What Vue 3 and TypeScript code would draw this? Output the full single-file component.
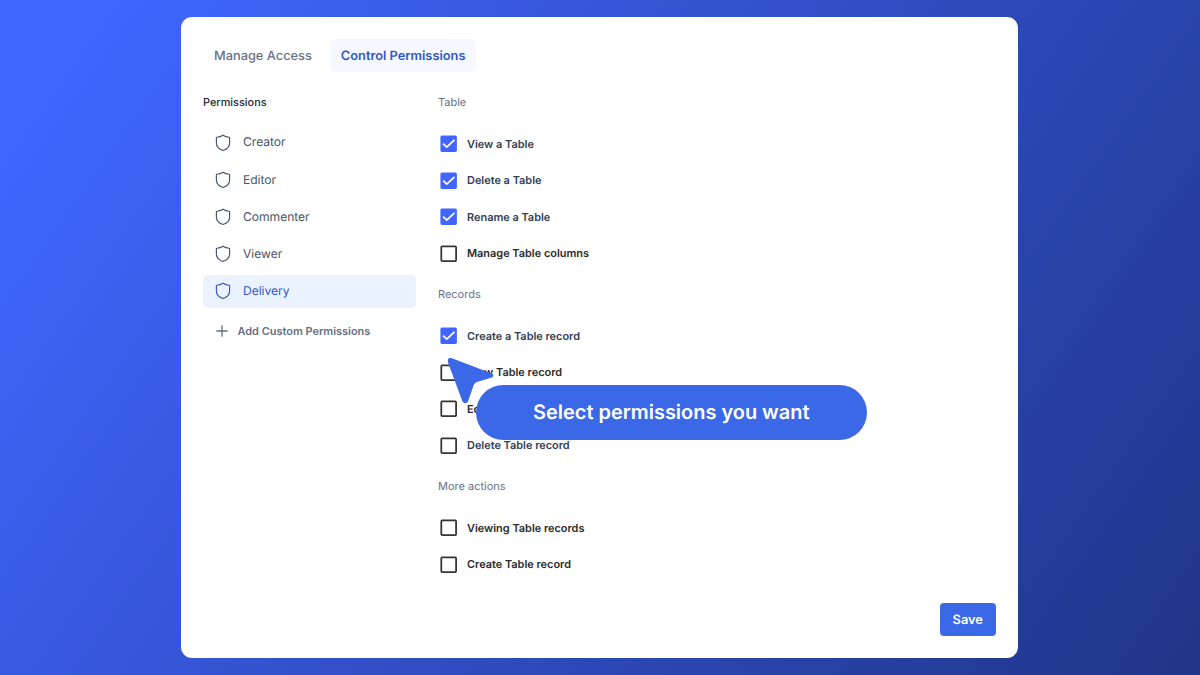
<script setup lang="ts">
interface Permission {
  label: string
  checked: boolean
  tone: 'slate' | 'ink'
}

interface Group {
  title: string
  items: Permission[]
}

const roles: string[] = ['Creator', 'Editor', 'Commenter', 'Viewer', 'Delivery']
const activeRole = 'Delivery'

const groups: Group[] = [
  {
    title: 'Table',
    items: [
      { label: 'View a Table', checked: true, tone: 'slate' },
      { label: 'Delete a Table', checked: true, tone: 'slate' },
      { label: 'Rename a Table', checked: true, tone: 'slate' },
      { label: 'Manage Table columns', checked: false, tone: 'ink' },
    ],
  },
  {
    title: 'Records',
    items: [
      { label: 'Create a Table record', checked: true, tone: 'slate' },
      { label: 'View Table record', checked: false, tone: 'ink' },
      { label: 'Edit Table record', checked: false, tone: 'ink' },
      { label: 'Delete Table record', checked: false, tone: 'slate' },
    ],
  },
  {
    title: 'More actions',
    items: [
      { label: 'Viewing Table records', checked: false, tone: 'ink' },
      { label: 'Create Table record', checked: false, tone: 'ink' },
    ],
  },
]
</script>

<template>
  <main class="stage">
    <section class="card">
      <nav class="tabs">
        <button class="tab">Manage Access</button>
        <button class="tab active">Control Permissions</button>
      </nav>

      <div class="columns">
        <aside class="sidebar">
          <h2 class="side-title">Permissions</h2>
          <ul class="roles">
            <li v-for="role in roles" :key="role" class="role" :class="{ active: role === activeRole }">
              <svg class="shield" viewBox="0 0 16 18" fill="none" stroke="currentColor" stroke-width="1.15" stroke-linejoin="round">
                <path d="M8 1.2C6.3 2.3 3.9 3 1.8 3.2C1.5 3.2 1.4 3.3 1.4 3.6V8.9C1.4 12.2 4 15 8 16.5C12 15 14.6 12.2 14.6 8.9V3.6C14.6 3.3 14.5 3.2 14.2 3.2C12.1 3 9.7 2.3 8 1.2Z" />
              </svg>
              <span>{{ role }}</span>
            </li>
          </ul>
          <button class="add">
            <svg class="plus" viewBox="0 0 12 12" fill="none" stroke="currentColor" stroke-width="1.3" stroke-linecap="round">
              <path d="M6 .8V11.2M.8 6H11.2" />
            </svg>
            <span>Add Custom Permissions</span>
          </button>
        </aside>

        <div class="groups">
          <section v-for="group in groups" :key="group.title" class="group">
            <h3 class="group-title">{{ group.title }}</h3>
            <div v-for="item in group.items" :key="item.label" class="row" :class="item.tone">
              <svg class="box" viewBox="-.3 -.2 17 17" fill="none">
                <template v-if="item.checked">
                  <rect x=".1" y=".2" width="16.5" height="16.5" rx="1.6" fill="#4066ff" />
                  <path d="M2.8 8.5L6.5 12L14.2 4.6" stroke="#fff" stroke-width="1.7" />
                </template>
                <rect v-else x="1" y="1.1" width="14.8" height="14.8" rx=".9" stroke="#333" stroke-width="1.75" />
              </svg>
              <span>{{ item.label }}</span>
            </div>
          </section>
        </div>
      </div>

      <button class="save">Save</button>
    </section>

    <div class="callout">Select permissions you want</div>
    <svg class="cursor" viewBox="0 0 48 48">
      <path d="M4.6 .4L43.2 15.2C46.1 16.4 46.1 18.8 43.2 19.7L29.6 23.7C27.6 24.3 26.2 25.8 25.5 27.6L20.2 43C19.1 46 15.3 45.8 14.2 42.8L.3 5.2C-.8 2-.1-1.3 4.6 .4Z" fill="#3b68e6" />
    </svg>
  </main>
</template>

<style>
body {
  margin: 0;
}
</style>

<style scoped>
.stage {
  position: relative;
  box-sizing: border-box;
  width: 1200px;
  height: 675px;
  padding: 17px 182px 17px 181px;
  overflow: hidden;
  background: linear-gradient(125deg, #4066ff 6%, #20368a 98%);
  font-family: Inter, 'Liberation Sans', sans-serif;
  text-rendering: geometricPrecision;
}

button {
  border: 0;
  padding: 0;
  background: none;
  font: inherit;
  color: inherit;
  text-rendering: inherit;
}

h2,
h3,
ul {
  margin: 0;
  padding: 0;
  list-style: none;
  font-weight: 400;
}

.card {
  display: flex;
  flex-direction: column;
  box-sizing: border-box;
  height: 641px;
  padding: 22px;
  border-radius: 11px;
  background: #fff;
}

.tabs {
  display: flex;
  gap: 7px;
}

.tab {
  height: 33px;
  padding: 2px 11px 0;
  border-radius: 5px;
  color: #667085;
  font-size: 12.8px;
  font-weight: 500;
  line-height: 31px;
  white-space: nowrap;
}

.tab.active {
  background: #f5f8ff;
  color: #3058c4;
  font-weight: 600;
}

.columns {
  display: flex;
  flex: 1;
  gap: 22px;
  padding-top: 22px;
}

.sidebar {
  width: 213px;
}

.side-title {
  height: 16px;
  color: #1f2937;
  font-size: 10.9px;
  font-weight: 500;
  line-height: 16px;
}

.roles {
  display: flex;
  flex-direction: column;
  gap: 4.2px;
  padding-top: 16.2px;
}

.role {
  display: flex;
  align-items: center;
  gap: 12px;
  height: 33px;
  padding-left: 12px;
  border-radius: 5px;
  color: #475467;
  font-size: 12.1px;
  letter-spacing: -0.03px;
}

.role span {
  padding-bottom: 1.4px;
}

.role.active {
  background: #ebf2ff;
  color: #3058c4;
}

.shield {
  width: 16px;
  height: 18px;
}

.add {
  display: flex;
  align-items: center;
  gap: 9.5px;
  height: 20px;
  margin-top: 13px;
  padding-left: 13px;
  color: #667085;
  font-size: 10.95px;
  font-weight: 600;
}

.plus {
  width: 12px;
  height: 12px;
}

.group {
  height: 192px;
}

.group-title {
  height: 16px;
  margin-bottom: 15.4px;
  color: #667085;
  font-size: 11px;
  line-height: 16px;
}

.row {
  display: flex;
  align-items: center;
  gap: 10px;
  height: 36.5px;
  padding-left: 2px;
  font-size: 10.93px;
  font-weight: 600;
}

.slate {
  color: #344054;
}

.ink {
  color: #2b2b2b;
}

.box {
  width: 17px;
  height: 17px;
}

.groups {
  height: 0;
}

.save {
  align-self: flex-end;
  width: 56.5px;
  height: 33.5px;
  padding-top: 2px;
  border-radius: 4px;
  background: #3b68e6;
  color: #fff;
  font-size: 12.8px;
  font-weight: 600;
}

.callout {
  position: absolute;
  left: 476px;
  top: 384.5px;
  width: 390.5px;
  height: 55px;
  border-radius: 28px;
  background: #3b68e6;
  color: #fff;
  font-size: 19.95px;
  font-weight: 600;
  line-height: 55px;
  text-align: center;
}

.cursor {
  position: absolute;
  left: 448px;
  top: 358px;
  width: 48px;
  height: 48px;
}
</style>
